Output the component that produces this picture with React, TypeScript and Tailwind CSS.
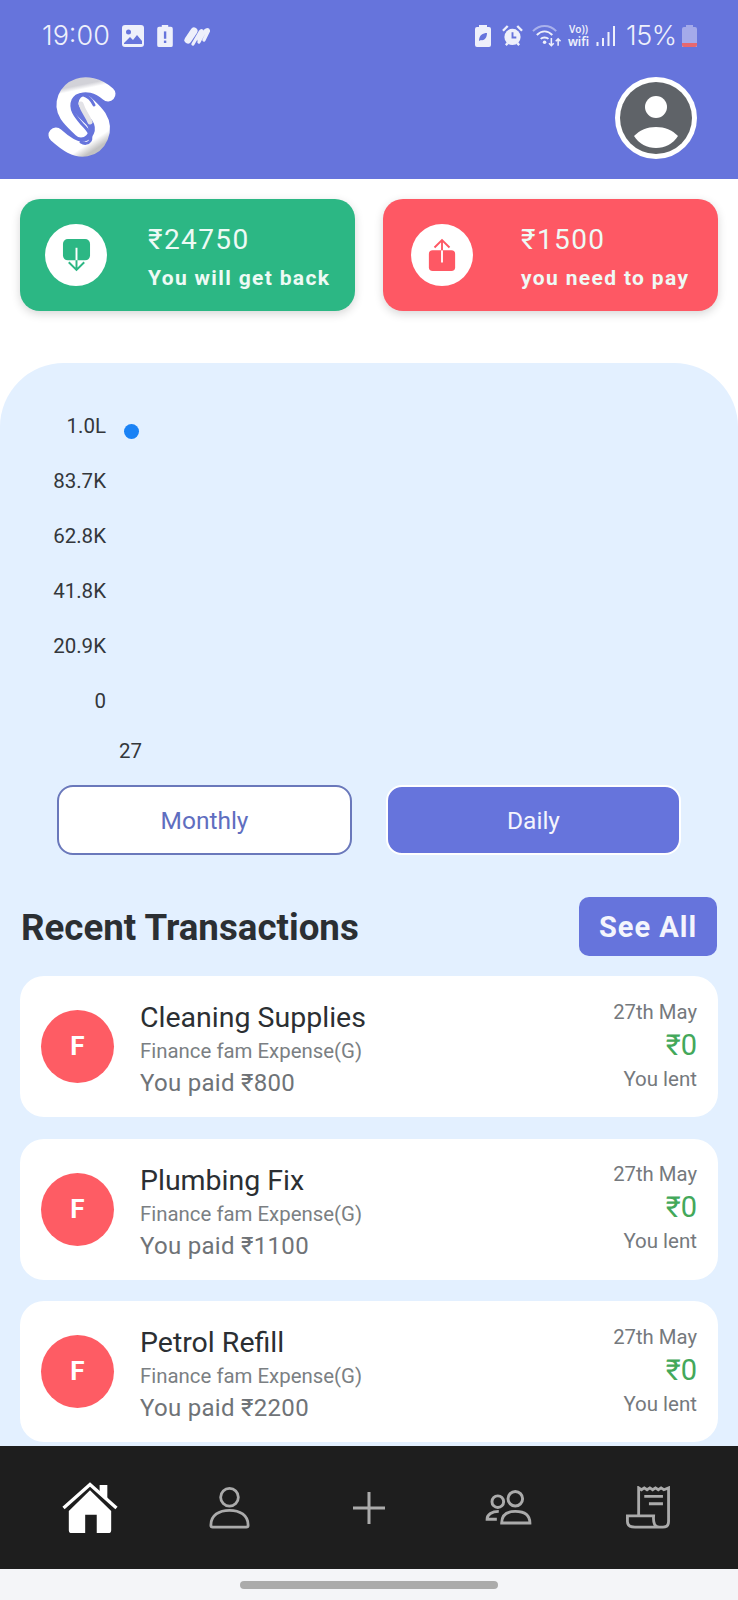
import React from "react";

const font = { fontFamily: 'Roboto, "Noto Sans", sans-serif' };
const statusFont = { fontFamily: 'Inter, "Noto Sans", sans-serif', fontWeight: 300 };

function Logo() {
  return (
    <svg width="90" height="95" viewBox="0 0 90 95" fill="none" className="shrink-0">
      <defs>
        <linearGradient id="lgTop" x1="0.4" y1="0" x2="0.6" y2="1">
          <stop offset="0" stopColor="#d2d2d8" />
          <stop offset="0.1" stopColor="#ffffff" />
          <stop offset="1" stopColor="#ffffff" />
        </linearGradient>
        <linearGradient id="lgBottom" x1="0.2" y1="0" x2="0.85" y2="1">
          <stop offset="0" stopColor="#ffffff" />
          <stop offset="0.84" stopColor="#ffffff" />
          <stop offset="1" stopColor="#c2c2c2" />
        </linearGradient>
      </defs>
      <path d="M68 24 C58 15 46 13 38 16 C26 20 20 34 27 45 C31 51 36 55 41 60" stroke="url(#lgTop)" strokeWidth="15" strokeLinecap="round" />
      <path d="M16 65 C26 74 36 81 46 79 C60 76 67 60 59 47 C55 41 50 37 46 33" stroke="url(#lgBottom)" strokeWidth="15" strokeLinecap="round" />
      <path d="M41 34 C43 41 47 45 50 52" stroke="#e2e2e6" strokeWidth="5" strokeLinecap="round" />
      <path d="M54 35 C49 24 38 21 33 30 C29 39 36 47 42 54 C48 60 53 66 50 71 C48 74 44 74 41 72" stroke="#6674dc" strokeWidth="3" strokeLinecap="round" />
    </svg>
  );
}

function Avatar() {
  return (
    <div className="w-[82px] h-[82px] rounded-full bg-white flex items-center justify-center">
      <svg width="72" height="72" viewBox="0 0 72 72">
        <circle cx="36" cy="36" r="36" fill="#5f6368" />
        <circle cx="36" cy="25" r="11" fill="#fff" />
        <path d="M14 54 C20 48 27 45 36 45 C45 45 52 48 58 54 C53 62 45 66 36 66 C27 66 19 62 14 54 Z" fill="#fff" />
      </svg>
    </div>
  );
}

function StatusLeft() {
  return (
    <div className="flex items-center">
      <span className="w-[68px] text-[27px] leading-[30px] text-[#eef0fb] whitespace-nowrap" style={statusFont}>19:00</span>
      <svg className="ml-[12px]" width="22" height="22" viewBox="0 0 22 22">
        <rect width="22" height="22" rx="3" fill="#eef0fb" />
        <circle cx="6.5" cy="7" r="2.5" fill="#6674dc" />
        <path d="M2 18 L8 12 L11 15 L15 10 L20 16 V19 H2 Z" fill="#6674dc" />
      </svg>
      <svg className="ml-[13px]" width="16" height="22" viewBox="0 0 17 24">
        <path d="M5 0 H12 V2 H15 Q17 2 17 4 V22 Q17 24 15 24 H2 Q0 24 0 22 V4 Q0 2 2 2 H5 Z" fill="#eef0fb" />
        <rect x="7.3" y="7" width="2.6" height="8" fill="#6674dc" />
        <rect x="7.3" y="17" width="2.6" height="2.6" fill="#6674dc" />
      </svg>
      <svg className="ml-[11px]" width="26" height="20" viewBox="0 0 26 20" fill="none">
        <path d="M4 14 L10 5" stroke="#eef0fb" strokeWidth="7" strokeLinecap="round" />
        <path d="M9 18 L16 6 Q18 3 18.5 6 L15 14" stroke="#eef0fb" strokeWidth="3.2" strokeLinecap="round" />
        <path d="M15 16 L21 5 Q24 2 24.5 5 L20 14" stroke="#eef0fb" strokeWidth="3.2" strokeLinecap="round" />
      </svg>
    </div>
  );
}

function StatusRight() {
  return (
    <div className="flex items-center">
      <svg width="16" height="22" viewBox="0 0 16 22">
        <path d="M4 0 H12 V2 H14 Q16 2 16 4 V20 Q16 22 14 22 H2 Q0 22 0 20 V4 Q0 2 2 2 H4 Z" fill="#eef0fb" />
        <path d="M4 16 C4 10 8 8 12 8 C12 13 9 16 6 15 Z" fill="#6674dc" />
      </svg>
      <svg className="ml-[11px]" width="21" height="22" viewBox="0 0 22 23" fill="none">
        <circle cx="11" cy="12.5" r="8.5" fill="#eef0fb" />
        <path d="M11 7.5 V13 H15" stroke="#6674dc" strokeWidth="2" />
        <path d="M1 6 L6 1 M21 6 L16 1 M4 21 L6 19 M18 21 L16 19" stroke="#eef0fb" strokeWidth="2.5" />
      </svg>
      <svg className="ml-[9px]" width="30" height="24" viewBox="0 0 31 24" fill="none">
        <path d="M1 7 C8 0 18 0 25 7" stroke="#a9b1ec" strokeWidth="2" />
        <path d="M5 11 C10 6 16 6 21 11" stroke="#eef0fb" strokeWidth="2" />
        <path d="M9 15 C11 13 15 13 17 15" stroke="#eef0fb" strokeWidth="2" />
        <circle cx="13" cy="18.5" r="1.8" fill="#eef0fb" />
        <path d="M20 14 V22 M17.5 19.5 L20 22 L22.5 19.5 M27 22 V15 M24.5 17.5 L27 15 L29.5 17.5" stroke="#eef0fb" strokeWidth="1.6" />
      </svg>
      <div className="ml-[6px] w-[21px] flex flex-col items-center text-[#eef0fb] font-semibold gap-[1px]" style={{ fontFamily: '"Noto Sans", sans-serif' }}>
        <span className="text-[10px] leading-[11px] whitespace-nowrap">Vo))</span>
        <span className="text-[12px] leading-[12px] whitespace-nowrap">wifi</span>
      </div>
      <svg className="ml-[7px]" width="20" height="21" viewBox="0 0 19 21" fill="#eef0fb">
        <rect x="0" y="16" width="2" height="4" />
        <rect x="5.5" y="12" width="2" height="8" />
        <rect x="11" y="6" width="2" height="14" />
        <rect x="16.5" y="0" width="2" height="20" />
      </svg>
      <span className="ml-[10px] w-[50px] text-[27px] leading-[30px] text-[#eef0fb] whitespace-nowrap tracking-[-0.4px]" style={statusFont}>15%</span>
      <svg className="ml-[6px]" width="15" height="22" viewBox="0 0 15 22">
        <path d="M4 0 H11 V2 H13 Q15 2 15 4 V22 H0 V4 Q0 2 2 2 H4 Z" fill="#a4aaea" />
        <path d="M0 18 H15 V20 Q15 22 13 22 H2 Q0 22 0 20 Z" fill="#e8686f" />
      </svg>
    </div>
  );
}

function SummaryCard({ color, amount, label, up, gap }: { color: string; amount: string; label: string; up?: boolean; gap: string }) {
  return (
    <div className={`w-[335px] h-[112px] rounded-[20px] flex items-center shadow-[0_3px_10px_rgba(0,0,0,0.16)] ${up ? "bg-[#fe5864] pl-[28px]" : "bg-[#2cb784] pl-[25px]"}`}>
      <div className="w-[62px] h-[62px] rounded-full bg-white flex items-center justify-center shrink-0">
        {up ? (
          <svg width="30" height="34" viewBox="0 0 32 36" fill="none">
            <rect x="2" y="13" width="28" height="22" rx="4" fill={color} />
            <path d="M16 26 V13" stroke="white" strokeWidth="2" />
            <path d="M8 10 L16 2 L24 10 M16 13 V2" stroke={color} strokeWidth="2" />
          </svg>
        ) : (
          <svg width="29" height="35" viewBox="0 0 30 36" fill="none">
            <rect x="1" y="1" width="28" height="22" rx="5" fill={color} />
            <path d="M15 10 V23" stroke="white" strokeWidth="2" />
            <path d="M15 23 V33 M7 25 L15 33 L23 25" stroke={color} strokeWidth="2" />
          </svg>
        )}
      </div>
      <div className={`flex flex-col mt-[3px] ${gap}`}>
        <span className="text-[28px] leading-[33px] tracking-[1.4px] text-[#eefaf5]">{amount}</span>
        <span className="text-[21px] leading-[26px] font-bold tracking-[1.35px] mt-[9px] text-[#eefaf5] whitespace-nowrap">{label}</span>
      </div>
    </div>
  );
}

function Row({ title, paid }: { title: string; paid: string }) {
  return (
    <div className="h-[141px] bg-white rounded-[24px] flex items-center pl-[21px] pr-[21px] shrink-0">
      <div className="w-[73px] h-[73px] rounded-full bg-[#fe5c64] flex items-center justify-center text-white text-[26px] font-bold shrink-0">F</div>
      <div className="flex flex-col ml-[26px] flex-1 pt-[5px]">
        <span className="text-[28.5px] leading-[33px] text-[#2b2f33]">{title}</span>
        <span className="text-[20.4px] leading-[24px] text-[#7b7f83] mt-[5px]">Finance fam Expense(G)</span>
        <span className="text-[24px] leading-[28px] text-[#6f7377] mt-[6px] tracking-[0.3px]">{paid}</span>
      </div>
      <div className="flex flex-col items-end -mt-[3px]">
        <span className="text-[20.3px] leading-[24px] text-[#75797d]">27th May</span>
        <span className="text-[29px] leading-[34px] text-[#43a85a] mt-[4px]">₹0</span>
        <span className="text-[20.5px] leading-[24px] text-[#75797d] mt-[5px]">You lent</span>
      </div>
    </div>
  );
}

function NavIcons() {
  const s = { stroke: "#ababab", strokeWidth: 3, fill: "none" } as const;
  return (
    <div className="h-[123px] bg-[#1e1e1e] shrink-0 grid grid-cols-5 items-center justify-items-center px-[20px]">
      <svg width="56" height="52" viewBox="0 0 58 54">
        <path d="M1.5 27 L29 2.5 L56.5 27" fill="none" stroke="#fff" strokeWidth="3.4" />
        <path d="M39 3 H47 V19 L39 12 Z" fill="#fff" />
        <path d="M7 30 L29 8.5 L51 30 V50 Q51 53 48 53 H36 V34 H24 V53 H10 Q7 53 7 50 Z" fill="#fff" />
      </svg>
      <svg width="41" height="43" viewBox="0 0 44 46">
        <circle cx="22" cy="12" r="9.5" {...s} />
        <path d="M2 42 C2 31 11 26 22 26 C33 26 42 31 42 42 Q42 44 40 44 H4 Q2 44 2 42 Z" {...s} />
      </svg>
      <svg width="34" height="34" viewBox="0 0 34 34">
        <path d="M17 1 V33 M1 17 H33" {...s} />
      </svg>
      <svg width="47" height="35" viewBox="0 0 48 36">
        <circle cx="13" cy="12" r="6" {...s} />
        <circle cx="31" cy="9" r="7.5" {...s} />
        <path d="M14 22 C7 22 2 25 2 30 H12" {...s} />
        <path d="M17 34 C17 25 23 22 31 22 C39 22 46 25 46 34 Z" {...s} />
      </svg>
      <svg width="46" height="43" viewBox="0 0 48 46">
        <path d="M14 32 V2 L17 4 L20 2 L23 4 L26 2 L29 4 L32 2 L35 4 L38 2 L41 4 L46 2 V38 Q46 44 40 44 H10 Q2 44 2 38 V32 H30 Q29 44 36 44" {...s} />
        <path d="M20 11 H40 M25 19 H40" {...s} />
      </svg>
    </div>
  );
}

const yLabels = ["1.0L", "83.7K", "62.8K", "41.8K", "20.9K", "0"];

export default function App() {
  return (
    <div className="w-[738px] h-[1600px] flex flex-col bg-white overflow-hidden" style={font}>
      <header className="bg-[#6674dc] h-[179px] shrink-0 flex flex-col">
        <div className="flex items-center justify-between pl-[42px] pr-[41px] pt-[21px] h-[51px]">
          <StatusLeft />
          <StatusRight />
        </div>
        <div className="flex items-center justify-between pl-[40px] pr-[41px] mt-[19px]">
          <Logo />
          <Avatar />
        </div>
      </header>

      <section className="flex gap-[28px] px-[20px] pt-[20px] shrink-0">
        <SummaryCard color="#2cb784" amount="₹24750" label="You will get back" gap="ml-[41px]" />
        <SummaryCard up color="#fe5864" amount="₹1500" label="you need to pay" gap="ml-[48px]" />
      </section>

      <main className="mt-[52px] flex-1 min-h-0 bg-[#e3f0ff] rounded-t-[64px] flex flex-col overflow-hidden">
        <div className="h-[422px] shrink-0 pt-[52px] relative">
          <div className="flex flex-col items-end w-[106px] text-[20.5px] text-[#33373b]">
            {yLabels.map((l) => (
              <span key={l} className="h-[55px] leading-[22px]">{l}</span>
            ))}
          </div>
          <span className="block ml-[119px] text-[20.5px] leading-[22px] text-[#33373b] -mt-[5px]">27</span>
          <div className="absolute left-[124px] top-[61px] w-[15px] h-[15px] rounded-full bg-[#1a82f5]" />
        </div>

        <div className="flex pl-[57px] gap-[34px] shrink-0">
          <button className="w-[295px] h-[70px] rounded-[16px] border-2 border-[#6a78bb] bg-white text-[#5f6ec0] text-[24.5px] pt-[2px]">Monthly</button>
          <button className="w-[295px] h-[70px] rounded-[16px] border-2 border-white bg-[#6674dc] text-[#f4f5fd] text-[24.5px] pt-[2px]">Daily</button>
        </div>

        <div className="flex items-center justify-between pl-[21px] pr-[21px] mt-[42px] shrink-0">
          <h2 className="text-[36.7px] leading-[42px] font-bold text-[#2b2f33] pt-[3px]">Recent Transactions</h2>
          <button className="w-[138px] h-[59px] rounded-[10px] bg-[#6674dc] text-[#f4f5fd] text-[29px] font-bold tracking-[1px] pt-[2px]">See All</button>
        </div>

        <div className="flex flex-col gap-[21.5px] px-[20px] mt-[20px]">
          <Row title="Cleaning Supplies" paid="You paid ₹800" />
          <Row title="Plumbing Fix" paid="You paid ₹1100" />
          <Row title="Petrol Refill" paid="You paid ₹2200" />
        </div>
      </main>

      <NavIcons />
      <div className="h-[31px] bg-[#f4f5f8] shrink-0 flex items-center justify-center">
        <div className="w-[258px] h-[8px] rounded-full bg-[#ababab]" />
      </div>
    </div>
  );
}
